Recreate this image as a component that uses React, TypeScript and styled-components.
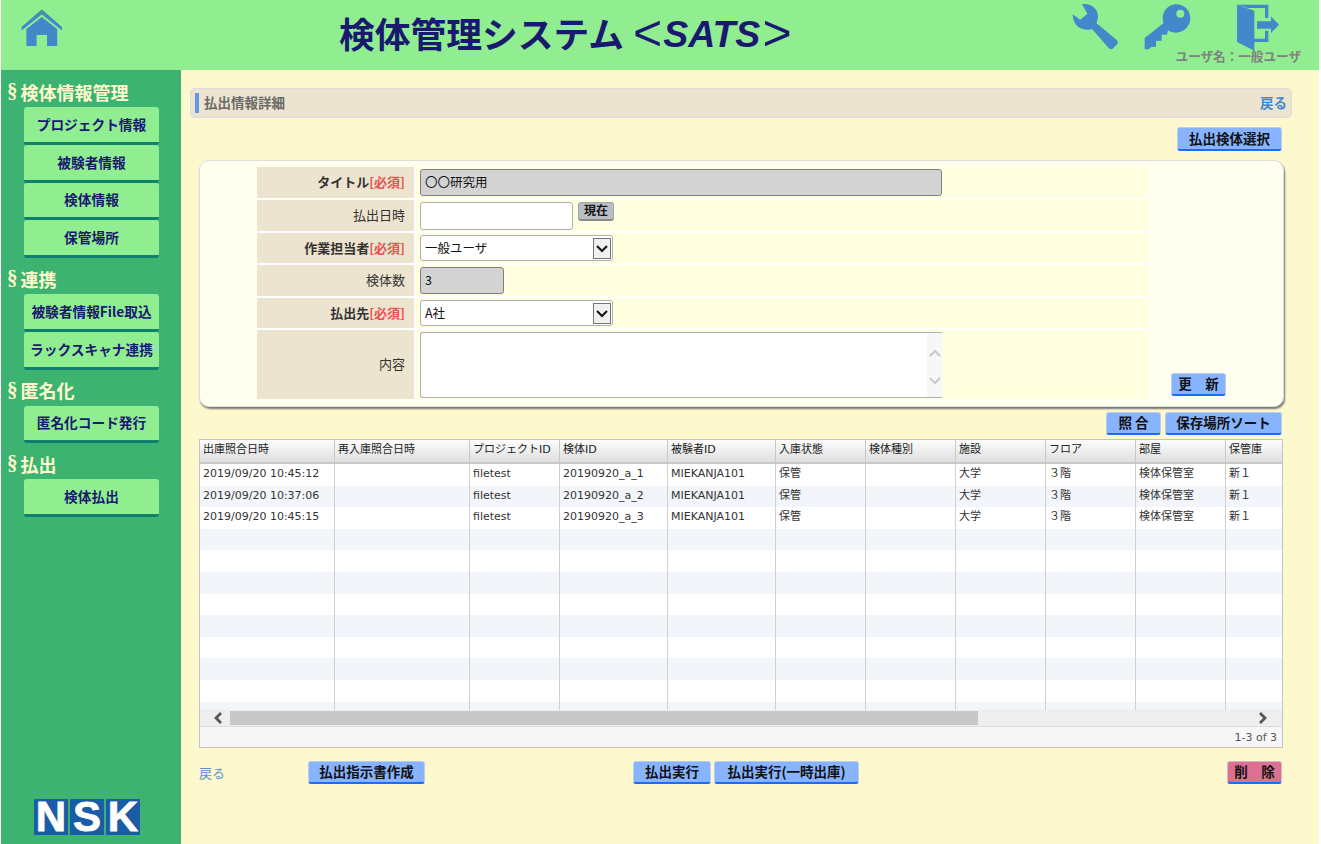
import React from "react";
import styled, { createGlobalStyle } from "styled-components";

const JP = `"Noto Sans CJK JP", sans-serif`;
const GRID_FONT = `"DejaVu Sans", "Noto Sans CJK JP", sans-serif`;
const COLS = "135px 135px 90px 108px 108px 90px 90px 90px 90px 90px 57px";

const Global = createGlobalStyle`
  html, body { margin: 0; padding: 0; background: #fff; }
  body { font-family: ${JP}; }
  * { box-sizing: border-box; }
`;

const Page = styled.div`
  width: 1318px;
  height: 844px;
  margin-left: 1px;
  display: flex;
  flex-direction: column;
  overflow: hidden;
`;

const Header = styled.header`
  height: 70px;
  flex: none;
  background: #90ee90;
  display: flex;
  align-items: flex-start;
`;
const HomeLink = styled.a`
  margin: 9px 0 0 20px;
  width: 42px;
  height: 38px;
  display: block;
`;
const Title = styled.h1`
  margin: 10px 0 0 276px;
  font-size: 35.75px;
  line-height: 44px;
  font-weight: 700;
  color: #191970;
  white-space: nowrap;
  display: flex;
  align-items: center;
`;
const TitleTag = styled.span`
  font-family: "Liberation Sans", ${JP};
  font-style: italic;
  font-size: 37.5px;
  margin: 2px 2px 0;
`;
const TitleBracket = styled.span<{ $open?: boolean }>`
  font-family: "Liberation Sans", ${JP};
  font-weight: 400;
  font-size: 50px;
  line-height: 44px;
  margin-left: ${(p) => (p.$open ? 9 : 0)}px;
  letter-spacing: -1px;
`;
const HeaderRight = styled.div`
  margin-left: auto;
  padding-right: 18px;
  display: flex;
  flex-direction: column;
  align-items: flex-end;
`;
const ToolIcons = styled.div`
  display: flex;
  align-items: flex-start;
  padding: 3px 20px 0 0;
  height: 51px;
`;
const ToolIcon = styled.a<{ $gap: number }>`
  display: block;
  margin-left: ${(p) => p.$gap}px;
  height: 47px;
  & > svg { display: block; }
`;
const UserName = styled.div`
  font-size: 12.6px;
  line-height: 14px;
  font-weight: 700;
  color: #808080;
  white-space: nowrap;
  margin-top: -2px;
`;

const Body = styled.div`
  flex: 1;
  display: flex;
  min-height: 0;
`;
const Sidebar = styled.nav`
  width: 180px;
  flex: none;
  background: #3cb371;
  display: flex;
  flex-direction: column;
  padding-top: 9px;
`;
const SectionTitle = styled.div`
  font-size: 18px;
  height: 28px;
  font-weight: 700;
  color: #fffacd;
  padding: 0 0 3px 6px;
  white-space: nowrap;
  display: flex;
  align-items: center;
`;
const SectionMark = styled.span`
  font-family: "Liberation Serif", serif;
  font-size: 21px;
  font-weight: 700;
  margin-right: 3px;
`;
const MenuGroup = styled.div`
  display: flex;
  flex-direction: column;
  margin-bottom: 8px;
`;
const MenuButton = styled.a`
  display: flex;
  align-items: center;
  justify-content: center;
  margin-left: 23px;
  width: 135px;
  height: 37.75px;
  padding-bottom: 1px;
  background: #90ee90;
  border-radius: 3px;
  border-bottom: 3px solid #0f8070;
  font-size: 13.7px;
  font-weight: 700;
  color: #191970;
  white-space: nowrap;
`;
const Logo = styled.div`
  margin: auto 0 9px 33px;
  display: flex;
  gap: 2px;
`;
const LogoLetter = styled.span`
  width: 34px;
  height: 36px;
  background: #1a5ca6;
  color: #fff;
  font-family: "Liberation Sans", sans-serif;
  font-weight: 700;
  font-size: 42px;
  line-height: 36px;
  text-align: center;
  -webkit-text-stroke: 0.8px #fff;
`;

const Main = styled.main`
  flex: 1;
  background: #fef8ce;
  padding: 18px 0 0 9px;
  min-width: 0;
`;
const TitleBar = styled.div`
  width: 1102px;
  height: 30px;
  background: #ece4ce;
  border: 1px solid #dcdce0;
  border-radius: 5px;
  display: flex;
  align-items: center;
  padding: 0 4px 0 4px;
`;
const TitleAccent = styled.i`
  width: 4px;
  height: 20px;
  background: #6495ed;
  margin-right: 5px;
`;
const TitleText = styled.span`
  font-size: 13.5px;
  font-weight: 700;
  color: #6a6a6a;
  margin-bottom: 3px;
`;
const BackBold = styled.a`
  margin: 0 0 3px auto;
  font-size: 13.5px;
  font-weight: 700;
  color: #4488cc;
`;
const Inner = styled.div`
  margin: 9px 0 0 9px;
  width: 1085px;
`;
const ButtonRow = styled.div<{ $mt?: number }>`
  display: flex;
  justify-content: flex-end;
  gap: 4px;
  padding-right: 2px;
  margin-top: ${(p) => p.$mt ?? 0}px;
`;
const Button = styled.button<{ $w: number; $h?: number; $danger?: boolean; $ml?: number }>`
  width: ${(p) => p.$w}px;
  height: ${(p) => p.$h ?? 23}px;
  margin-left: ${(p) => p.$ml ?? 0}px;
  padding: 0 0 2px;
  flex: none;
  background: ${(p) => (p.$danger ? "#db7093" : "#88b4ff")};
  border: 1px solid ${(p) => (p.$danger ? "#d8b8c8" : "#b8ccec")};
  border-bottom: 2px solid #1a6cff;
  border-radius: 3px;
  font-family: ${JP};
  font-size: 13.5px;
  line-height: 18px;
  font-weight: 700;
  color: #111;
  white-space: pre;
`;
const Panel = styled.section`
  margin-top: 9px;
  height: 247px;
  background: #fffff0;
  border: 1px solid #ddd;
  border-radius: 10px;
  box-shadow: 1px 2px 2px #777;
  display: flex;
  padding: 6px 0 0 57px;
`;
const FormTable = styled.div`
  width: 890px;
  height: 232px;
  display: grid;
  grid-template-columns: 157px 1fr;
  grid-template-rows: 31px 31px 30px 31px 30px 69px;
  gap: 2px;
  background: #fff;
`;
const Label = styled.div<{ $req?: boolean }>`
  background: #ece4ce;
  display: flex;
  align-items: center;
  justify-content: flex-end;
  padding: 0 9px 2px 0;
  font-size: 13px;
  font-weight: ${(p) => (p.$req ? 700 : 400)};
  color: #333;
  white-space: nowrap;
`;
const Required = styled.span`
  color: #ec4f4f;
`;
const Value = styled.div`
  background: #ffffe0;
  display: flex;
  align-items: flex-start;
  padding: 2px 0 0 4px;
  gap: 5px;
`;
const TextInput = styled.input<{ $w: number; $off?: boolean }>`
  width: ${(p) => p.$w}px;
  height: ${(p) => (p.$off ? 27 : 28)}px;
  padding: 0 4px 2px;
  background: ${(p) => (p.$off ? "#d3d3d3" : "#fff")};
  border: 1px solid ${(p) => (p.$off ? "#808080" : "#b0b0b0")};
  border-radius: 3px;
  font-family: ${JP};
  font-size: 12.5px;
  color: #111;
  outline: none;
`;
const NowButton = styled.button`
  width: 36px;
  height: 19px;
  padding: 0 0 2px;
  background: #b8bec4;
  border: 1px solid #a0a6aa;
  border-bottom: 2px solid #858b90;
  border-radius: 3px;
  font-family: ${JP};
  font-size: 12px;
  line-height: 14px;
  font-weight: 700;
  color: #111;
`;
const Select = styled.div`
  width: 193px;
  height: 26px;
  background: #fff;
  border: 1px solid #b0b0b0;
  border-radius: 3px;
  display: flex;
  align-items: center;
  justify-content: space-between;
  padding: 0 1px 0 4px;
  font-size: 12.5px;
  color: #111;
`;
const SelectText = styled.span`
  margin-bottom: 2px;
`;
const SelectArrow = styled.span`
  width: 18px;
  height: 21px;
  background: #f0f0f0;
  border: 1px solid #767676;
  display: flex;
  align-items: center;
  justify-content: center;
`;
const TextArea = styled.div`
  width: 522px;
  height: 66px;
  background: #fff;
  border: 1px solid #b0b0b0;
  border-right: none;
  border-radius: 3px 0 0 3px;
  display: flex;
  justify-content: flex-end;
`;
const AreaScroll = styled.div`
  width: 15px;
  background: #f7f7f7;
  display: flex;
  flex-direction: column;
  align-items: center;
  gap: 12px;
  padding-top: 14px;
`;
const PanelSide = styled.div`
  flex: 1;
  display: flex;
  justify-content: flex-start;
  align-items: flex-end;
  padding: 0 0 10px 24px;
`;

const DataGrid = styled.div`
  margin-top: 4px;
  width: 1084px;
  height: 309px;
  background: #fff;
  border: 1px solid #c4c4c4;
  border-bottom-color: #c8c0b0;
  display: flex;
  flex-direction: column;
  font-family: ${GRID_FONT};
  font-size: 11px;
  color: #333;
`;
const HeadRow = styled.div`
  flex: none;
  height: 24px;
  display: grid;
  grid-template-columns: ${COLS};
  background: linear-gradient(#fdfdfd, #dedede);
  border-bottom: 2px solid #c8c8c8;
  color: #222;
`;
const HeadCell = styled.div`
  border-right: 1px solid #c8c8c8;
  padding: 0 3px;
  line-height: 20px;
  white-space: nowrap;
  overflow: hidden;
  &:last-child { border-right: none; }
`;
const RowsArea = styled.div`
  flex: none;
  height: 246px;
  overflow: hidden;
`;
const Row = styled.div<{ $alt: boolean }>`
  height: 21.6px;
  display: grid;
  grid-template-columns: ${COLS};
  background: ${(p) => (p.$alt ? "#f2f5fa" : "#fff")};
`;
const Cell = styled.div`
  border-right: 1px solid #d0d0d0;
  padding: 0 3px;
  line-height: 20.5px;
  white-space: nowrap;
  overflow: hidden;
  &:last-child { border-right: none; }
`;
const HScroll = styled.div`
  flex: none;
  height: 17px;
  padding-top: 1px;
  background: #eee;
  border-bottom: 1px solid #dcdcdc;
  display: flex;
  align-items: flex-start;
`;
const ScrollEnd = styled.span<{ $w: number; $pl: number }>`
  width: ${(p) => p.$w}px;
  height: 14px;
  flex: none;
  display: flex;
  align-items: center;
  justify-content: center;
  padding-left: ${(p) => p.$pl}px;
`;
const ScrollThumbTrack = styled.div`
  flex: 1;
  height: 14px;
`;
const ScrollThumb = styled.div`
  width: 748px;
  height: 14px;
  background: #c8c8c8;
`;
const GridFooter = styled.div`
  flex: 1;
  min-height: 0;
  background: #f7f7f7;
  display: flex;
  align-items: center;
  justify-content: flex-end;
  padding-right: 5px;
  color: #555;
`;
const BottomBar = styled.div`
  margin-top: 13px;
  height: 22px;
  display: flex;
  align-items: center;
`;
const BackLink = styled.a`
  width: 109px;
  font-size: 13px;
  line-height: 26px;
  padding-top: 2px;
  color: #5a94d0;
  flex: none;
`;

const HEAD = ["出庫照合日時", "再入庫照合日時", "プロジェクトID", "検体ID", "被験者ID", "入庫状態", "検体種別", "施設", "フロア", "部屋", "保管庫"];
const DATA = [
  ["2019/09/20 10:45:12", "", "filetest", "20190920_a_1", "MIEKANJA101", "保管", "", "大学", "３階", "検体保管室", "新１"],
  ["2019/09/20 10:37:06", "", "filetest", "20190920_a_2", "MIEKANJA101", "保管", "", "大学", "３階", "検体保管室", "新１"],
  ["2019/09/20 10:45:15", "", "filetest", "20190920_a_3", "MIEKANJA101", "保管", "", "大学", "３階", "検体保管室", "新１"],
];
const ROWS = Array.from({ length: 12 }, (_, i) => DATA[i] ?? HEAD.map(() => ""));

const MENU: { title: string; items: string[] }[] = [
  { title: "検体情報管理", items: ["プロジェクト情報", "被験者情報", "検体情報", "保管場所"] },
  { title: "連携", items: ["被験者情報File取込", "ラックスキャナ連携"] },
  { title: "匿名化", items: ["匿名化コード発行"] },
  { title: "払出", items: ["検体払出"] },
];

const Chevron = ({ dir, size, color, width }: { dir: "up" | "down" | "left" | "right"; size: number; color: string; width: number }) => {
  const d = {
    up: "M2 9 L7 4 L12 9",
    down: "M2 5 L7 10 L12 5",
    left: "M9 2 L4 7 L9 12",
    right: "M5 2 L10 7 L5 12",
  }[dir];
  return (
    <svg width={size} height={size} viewBox="0 0 14 14" fill="none" stroke={color} strokeWidth={width}>
      <path d={d} />
    </svg>
  );
};

const HomeIcon = () => (
  <svg width="42" height="38" viewBox="0 0 42 38">
    <defs>
      <linearGradient id="homeFill" x1="0" y1="0" x2="0" y2="1">
        <stop offset="0" stopColor="#3d9a9a" />
        <stop offset="0.55" stopColor="#4488cc" />
      </linearGradient>
    </defs>
    <path fill="url(#homeFill)" d="M20.8 0.3 L41 18 V21.5 L20.8 5.6 L0.6 21.5 V18 Z" />
    <path fill="#4488cc" d="M20.8 8 L36.2 20 V37 H26 V26 H15.6 V37 H5.4 V20 Z" />
  </svg>
);

const WrenchIcon = () => (
  <svg width="47" height="47" viewBox="20 8 141 141" fill="#4488cc">
    <path d="M50 12 C72 8 98 22 98 48 C98 56 96 62 93 68 L155 120 Q160 126 156 131 L142 145 Q136 149 130 143 L80 86 C60 94 22 84 22 42 L45 58 L66 40 Z" />
  </svg>
);

const KeyIcon = () => (
  <svg width="47" height="47" viewBox="236 8 141 141" fill="#4488cc" fillRule="evenodd">
    <path d="M295 68 C285 40 305 12 333 12 C358 12 375 32 375 54 C375 78 355 97 332 97 C322 97 314 94 308 90 L305 103 L289 103 L289 121 L272 122 L272 139 L258 140 L250 147 L238 147 L238 113 Z M345 28 A12 12 0 1 0 345 52 A12 12 0 1 0 345 28 Z" />
  </svg>
);

const ExitIcon = () => (
  <svg width="45" height="49" viewBox="585 5 135 147" fill="#4488cc">
    <path d="M588 10 L640 28 V148 L588 122 Z" />
    <path d="M588 10 H682 V50 H672 V20 H620 Z" />
    <path d="M630 112 H672 V88 H682 V122 H630 Z" />
    <path d="M648 60 H690 V45 L714 70 L690 95 V82 H648 Z" />
  </svg>
);

export default function App() {
  return (
    <Page>
      <Global />
      <Header>
        <HomeLink><HomeIcon /></HomeLink>
        <Title>
          検体管理システム
          <TitleBracket $open>&lt;</TitleBracket>
          <TitleTag>SATS</TitleTag>
          <TitleBracket>&gt;</TitleBracket>
        </Title>
        <HeaderRight>
          <ToolIcons>
            <ToolIcon $gap={0}><WrenchIcon /></ToolIcon>
            <ToolIcon $gap={25}><KeyIcon /></ToolIcon>
            <ToolIcon $gap={45}><ExitIcon /></ToolIcon>
          </ToolIcons>
          <UserName>ユーザ名：一般ユーザ</UserName>
        </HeaderRight>
      </Header>
      <Body>
        <Sidebar>
          {MENU.map((m) => (
            <React.Fragment key={m.title}>
              <SectionTitle><SectionMark>§</SectionMark>{m.title}</SectionTitle>
              <MenuGroup>
                {m.items.map((it) => <MenuButton key={it}>{it}</MenuButton>)}
              </MenuGroup>
            </React.Fragment>
          ))}
          <Logo>
            <LogoLetter>N</LogoLetter>
            <LogoLetter>S</LogoLetter>
            <LogoLetter>K</LogoLetter>
          </Logo>
        </Sidebar>
        <Main>
          <TitleBar>
            <TitleAccent />
            <TitleText>払出情報詳細</TitleText>
            <BackBold>戻る</BackBold>
          </TitleBar>
          <Inner>
            <ButtonRow>
              <Button $w={105} $h={24}>払出検体選択</Button>
            </ButtonRow>
            <Panel>
              <FormTable>
                <Label $req>タイトル<Required>[必須]</Required></Label>
                <Value><TextInput $w={522} $off readOnly value="〇〇研究用" /></Value>
                <Label>払出日時</Label>
                <Value>
                  <TextInput $w={153} readOnly value="" />
                  <NowButton>現在</NowButton>
                </Value>
                <Label $req>作業担当者<Required>[必須]</Required></Label>
                <Value>
                  <Select><SelectText>一般ユーザ</SelectText><SelectArrow><Chevron dir="down" size={14} color="#111" width={2} /></SelectArrow></Select>
                </Value>
                <Label>検体数</Label>
                <Value><TextInput $w={84} $off readOnly value="3" /></Value>
                <Label $req>払出先<Required>[必須]</Required></Label>
                <Value>
                  <Select><SelectText>A社</SelectText><SelectArrow><Chevron dir="down" size={14} color="#111" width={2} /></SelectArrow></Select>
                </Value>
                <Label>内容</Label>
                <Value>
                  <TextArea>
                    <AreaScroll>
                      <Chevron dir="up" size={14} color="#c8c8c8" width={2} />
                      <Chevron dir="down" size={14} color="#c8c8c8" width={2} />
                    </AreaScroll>
                  </TextArea>
                </Value>
              </FormTable>
              <PanelSide>
                <Button $w={55}>{"更　新"}</Button>
              </PanelSide>
            </Panel>
            <ButtonRow $mt={5}>
              <Button $w={55}>照 合</Button>
              <Button $w={117}>保存場所ソート</Button>
            </ButtonRow>
            <DataGrid>
              <HeadRow>
                {HEAD.map((h) => <HeadCell key={h}>{h}</HeadCell>)}
              </HeadRow>
              <RowsArea>
                {ROWS.map((r, i) => (
                  <Row key={i} $alt={i % 2 === 1}>
                    {r.map((c, j) => <Cell key={j}>{c}</Cell>)}
                  </Row>
                ))}
              </RowsArea>
              <HScroll>
                <ScrollEnd $w={30} $pl={8}><Chevron dir="left" size={14} color="#555" width={2.8} /></ScrollEnd>
                <ScrollThumbTrack><ScrollThumb /></ScrollThumbTrack>
                <ScrollEnd $w={40} $pl={0}><Chevron dir="right" size={14} color="#555" width={2.8} /></ScrollEnd>
              </HScroll>
              <GridFooter>1-3 of 3</GridFooter>
            </DataGrid>
            <BottomBar>
              <BackLink>戻る</BackLink>
              <Button $w={117}>払出指示書作成</Button>
              <Button $w={78} $ml={208}>払出実行</Button>
              <Button $w={145} $ml={3}>払出実行(一時出庫)</Button>
              <Button $w={55} $ml={368} $danger>{"削　除"}</Button>
            </BottomBar>
          </Inner>
        </Main>
      </Body>
    </Page>
  );
}
